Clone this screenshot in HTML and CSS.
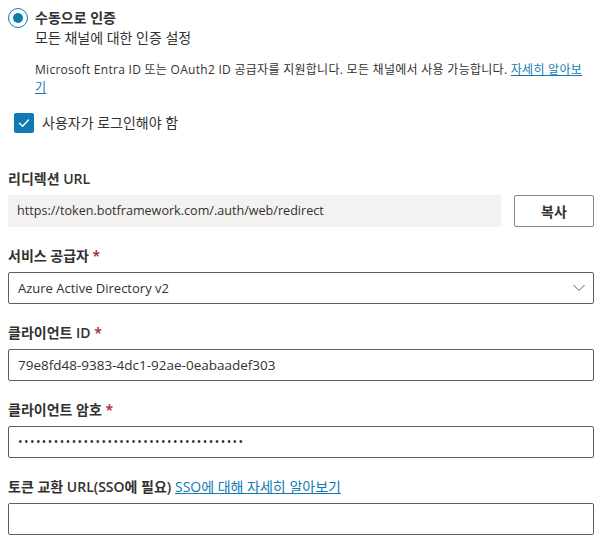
FILE: index.html
```html
<!DOCTYPE html>
<html lang="ko">
<head>
<meta charset="utf-8">
<link rel="stylesheet" href="styles.css">
</head>
<body>
<div class="page">
  <div class="radio-row">
    <span class="radio"><span class="dot"></span></span>
    <div class="radio-text">
      <div class="radio-title">수동으로 인증</div>
      <div class="radio-sub">모든 채널에 대한 인증 설정</div>
    </div>
  </div>
  <p class="desc">Microsoft Entra ID 또는 OAuth2 ID 공급자를 지원합니다. 모든 채널에서 사용 가능합니다. <a href="#" class="link">자세히 알아보기</a></p>
  <div class="check-row">
    <span class="checkbox">
      <svg width="14" height="14" viewBox="0 0 14 14"><path d="M2.5 7.3 L5.6 10.2 L11.5 4" fill="none" stroke="#fff" stroke-width="1.4" stroke-linecap="round" stroke-linejoin="round"/></svg>
    </span>
    <span class="check-label">사용자가 로그인해야 함</span>
  </div>

  <div class="field first">
    <div class="label">리디렉션 URL</div>
    <div class="url-row">
      <div class="readonly">https://token.botframework.com/.auth/web/redirect</div>
      <button class="btn">복사</button>
    </div>
  </div>

  <div class="field">
    <div class="label">서비스 공급자 <span class="req">*</span></div>
    <div class="input select">
      <span>Azure Active Directory v2</span>
      <svg width="12" height="8" viewBox="0 0 12 8"><path d="M0.5 1 L6 6.5 L11.5 1" fill="none" stroke="#605e5c" stroke-width="1"/></svg>
    </div>
  </div>

  <div class="field">
    <div class="label">클라이언트 ID <span class="req">*</span></div>
    <div class="input id">79e8fd48-9383-4dc1-92ae-0eabaadef303</div>
  </div>

  <div class="field">
    <div class="label">클라이언트 암호 <span class="req">*</span></div>
    <div class="input pw">••••••••••••••••••••••••••••••••••••••</div>
  </div>

  <div class="field">
    <div class="label">토큰 교환 URL(SSO에 필요) <a href="#" class="link">SSO에 대해 자세히 알아보기</a></div>
    <div class="input"></div>
  </div>
</div>
</body>
</html>
```
FILE: styles.css
```css
* { box-sizing: border-box; }
html, body { margin: 0; padding: 0; background: #fff; }
body {
  font-family: "Open Sans", "Noto Sans CJK KR", sans-serif;
  color: #323130;
  font-size: 14px;
}
.page { padding: 8px 9px 0 8px; }
.radio-row { display: flex; align-items: flex-start; gap: 7px; }
.radio {
  width: 20px; height: 20px; border-radius: 50%;
  border: 1px solid #117ab3;
  display: flex; align-items: center; justify-content: center;
  flex: none;
}
.dot { width: 10px; height: 10px; border-radius: 50%; background: #117ab3; }
.radio-title { font-weight: 600; font-size: 14px; line-height: 20px; }
.radio-sub { font-size: 14px; line-height: 20px; }
.desc {
  margin: 13px 8px 0 27px;
  font-size: 12px; line-height: 18px;
  letter-spacing: 0.28px;
  color: #323130;
}
.link { color: #117ab3; text-decoration: underline; font-weight: 400; }
.check-row { display: flex; align-items: center; gap: 8px; margin: 16px 0 0 6px; }
.checkbox {
  width: 20px; height: 20px; border-radius: 2px; background: #117ab3;
  display: flex; align-items: center; justify-content: center; flex: none;
}
.check-label { font-size: 14px; line-height: 20px; }
.field { margin-top: 19px; }
.field.first { margin-top: 36px; }
.label { font-weight: 600; font-size: 14px; line-height: 20px; margin-bottom: 6px; }
.req { color: #a4262c; }
.url-row { display: flex; gap: 13px; }
.readonly {
  flex: 1; height: 32px; background: #f3f2f1; border-radius: 2px;
  padding: 0 9px; font-size: 12.6px; line-height: 32px; color: #323130;
}
.btn {
  width: 80px; height: 32px; border: 1px solid #8a8886; border-radius: 2px;
  background: #fff; font-family: inherit; font-size: 14px; font-weight: 600; color: #323130;
  padding: 0;
}
.input {
  height: 32px; border: 1px solid #605e5c; border-radius: 2px;
  padding: 0 9px; font-size: 13px; line-height: 30px; color: #323130;
}
.id { font-size: 13.5px; }
.select { display: flex; justify-content: space-between; align-items: center; padding-right: 8px; }
.pw { font-size: 12px; letter-spacing: 1.45px; }
```
